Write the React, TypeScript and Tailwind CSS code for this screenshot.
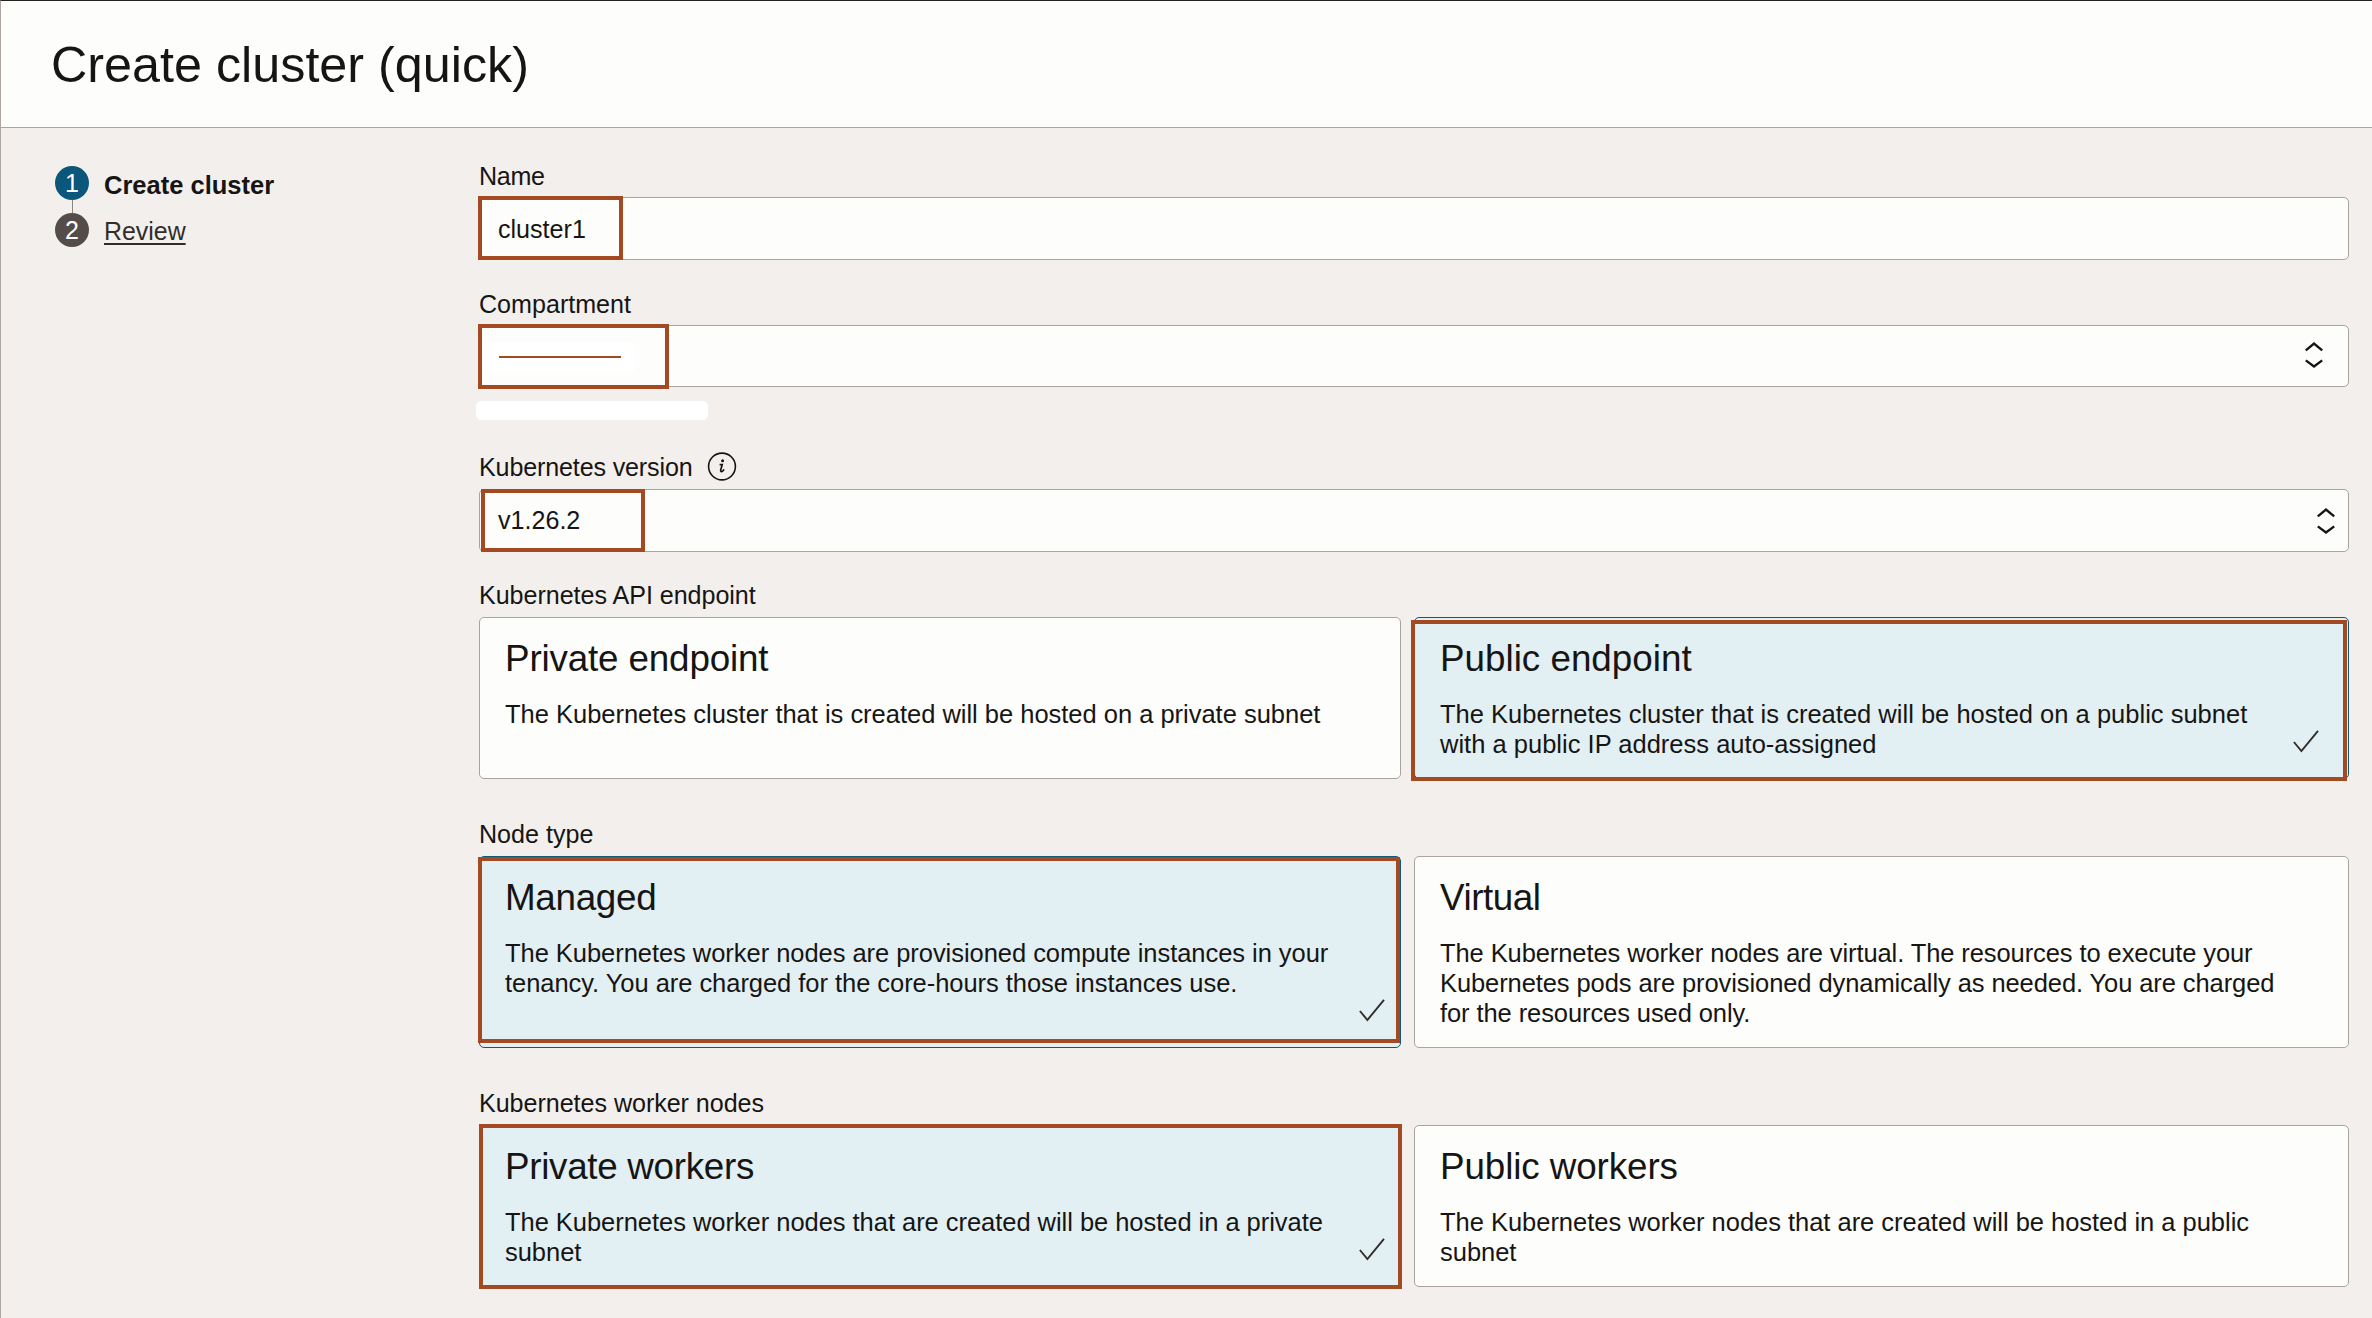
import type { ReactNode } from 'react';

function Highlight({ className }: { className: string }) {
  return <div className={'pointer-events-none absolute border-4 border-[#a34a22] ' + className} />;
}

function Label({ children, className }: { children: ReactNode; className: string }) {
  return (
    <div className={'flex h-[30px] items-center whitespace-nowrap text-[25.1px] leading-[30px] ' + className}>
      {children}
    </div>
  );
}

function Field({ children, className }: { children: ReactNode; className: string }) {
  return (
    <div
      className={
        'relative flex items-center justify-between rounded-[5px] border border-[#aaa39e] bg-[#fdfdfb] pl-[18px] text-[25.1px] leading-[30px] ' +
        className
      }
    >
      {children}
    </div>
  );
}

function Chevrons() {
  return (
    <svg width="18" height="26" viewBox="0 0 18 26" fill="none" stroke="#161513" strokeWidth="2.4">
      <path d="M0.8 8.4 L9 1.6 L17.2 8.4" />
      <path d="M0.8 18.4 L9 24.4 L17.2 18.4" />
    </svg>
  );
}

type CardProps = {
  title: string;
  titleClass?: string;
  lines: string[];
  textClass?: string;
  selected?: boolean;
  check?: string;
  highlight?: string;
};

function Card({ title, titleClass = '', lines, textClass = '', selected, check, highlight }: CardProps) {
  return (
    <div
      className={
        'relative rounded-[5px] border pl-[25px] pt-[21px] ' +
        (selected ? 'border-[#0b5a7c] bg-[#e2eff3]' : 'border-[#aaa39e] bg-[#fdfdfb]')
      }
    >
      <h2 className={'text-[36.8px] leading-[40px] ' + titleClass}>{title}</h2>
      <p className={'mt-[20px] text-[25.5px] leading-[30px] whitespace-nowrap ' + textClass}>
        {lines.map((line) => (
          <span key={line} className="block">
            {line}
          </span>
        ))}
      </p>
      {check && (
        <svg
          className={'absolute ' + check}
          width="26"
          height="23"
          viewBox="0 0 26 23"
          fill="none"
          stroke="#312d2a"
          strokeWidth="1.9"
        >
          <path d="M0.9 12 L8.4 21 L25 0.8" />
        </svg>
      )}
      {highlight && <Highlight className={highlight} />}
    </div>
  );
}

function CardRow({ children, className }: { children: ReactNode; className: string }) {
  return <div className={'grid grid-cols-[922px_935px] gap-[13px] ' + className}>{children}</div>;
}

export default function App() {
  return (
    <div className="h-[1318px] w-[2372px] overflow-hidden border-l border-t border-l-[#aca5a0] border-t-[#242120] bg-[#f3efed] font-['Liberation_Sans',Arial,sans-serif] text-[#161513]">
      <header className="flex h-[127px] items-center border-b border-[#aaa39e] bg-[#fdfdfb] pl-[50px] pt-[2px]">
        <h1 className="text-[50.3px] leading-[60px]">Create cluster (quick)</h1>
      </header>
      <div className="flex">
        <nav className="w-[478px] shrink-0 pl-[54px] pt-[38px]">
          <div className="flex h-[34px] items-center">
            <span className="flex size-[34px] items-center justify-center rounded-full bg-[#0b567b] text-[25px] leading-[34px] text-white">
              1
            </span>
            <span className="ml-[15px] mt-[3px] text-[25.5px] font-bold leading-[30px]">Create cluster</span>
          </div>
          <div className="ml-[17px] h-[13px] w-px bg-[#8b8580]" />
          <div className="flex h-[34px] items-center">
            <span className="flex size-[34px] items-center justify-center rounded-full bg-[#544c49] text-[25px] leading-[34px] text-white">
              2
            </span>
            <span className="ml-[15px] mt-[2px] text-[24.9px] leading-[30px] text-[#312d2a] underline decoration-2 underline-offset-[3px]">
              Review
            </span>
          </div>
        </nav>

        <main className="w-[1870px] pt-[33px]">
          <Label className="mb-[6px] tracking-[-0.3px]">Name</Label>
          <Field className="h-[63px]">
            <span>cluster1</span>
            <Highlight className="-left-[2px] -top-[2px] h-[64px] w-[145px]" />
          </Field>

          <Label className="mb-[6px] mt-[29px]">Compartment</Label>
          <Field className="h-[62px] pr-[25px]">
            <div className="-ml-[12px] mt-[2px] flex h-[30px] w-[149px] items-center rounded-[4px] bg-white pl-[13px]">
              <div className="h-[2px] w-[122px] bg-[#a34a22]" />
            </div>
            <div className="pb-[2px]">
              <Chevrons />
            </div>
            <Highlight className="-left-[2px] -top-[2px] h-[65px] w-[191px]" />
          </Field>
          <div className="-ml-[3px] mt-[14px] h-[19px] w-[232px] rounded-[5px] bg-white" />

          <Label className="mb-[7px] mt-[32px] tracking-[-0.15px]">
            Kubernetes version
            <svg className="ml-[14px]" width="30" height="30" viewBox="0 0 30 30" fill="none">
              <circle cx="15" cy="14.5" r="13.4" stroke="#161513" strokeWidth="1.6" />
              <circle cx="15.6" cy="8.8" r="1.5" fill="#161513" />
              <path d="M12.6 12.7 H15.2 L13.7 18 Q13.4 19.8 14.7 19.6 Q16.1 19.2 17 17.4" stroke="#161513" strokeWidth="1.7" />
            </svg>
          </Label>
          <Field className="h-[63px] pr-[13px]">
            <span className="-mt-[2px]">v1.26.2</span>
            <Chevrons />
            <Highlight className="-top-px left-[1px] h-[63px] w-[164px]" />
          </Field>

          <Label className="mb-[7px] mt-[28px] tracking-[-0.04px]">Kubernetes API endpoint</Label>
          <CardRow className="h-[162px]">
            <Card
              title="Private endpoint"
              titleClass="tracking-[-0.16px]"
              textClass="tracking-[-0.015px]"
              lines={['The Kubernetes cluster that is created will be hosted on a private subnet']}
            />
            <Card
              title="Public endpoint"
              lines={[
                'The Kubernetes cluster that is created will be hosted on a public subnet',
                'with a public IP address auto-assigned',
              ]}
              textClass="tracking-[0.01px]"
              selected
              check="left-[878px] top-[112px]"
              highlight="-left-[4px] top-[2px] h-[161px] w-[936px]"
            />
          </CardRow>

          <Label className="mb-[7px] mt-[40px]">Node type</Label>
          <CardRow className="h-[192px]">
            <Card
              title="Managed"
              titleClass="tracking-[-0.3px]"
              textClass="tracking-[-0.045px]"
              lines={[
                'The Kubernetes worker nodes are provisioned compute instances in your',
                'tenancy. You are charged for the core-hours those instances use.',
              ]}
              selected
              check="left-[879px] top-[142px]"
              highlight="-left-[2px] top-0 h-[186px] w-[922px]"
            />
            <Card
              title="Virtual"
              titleClass="tracking-[-0.45px]"
              textClass="tracking-[-0.09px]"
              lines={[
                'The Kubernetes worker nodes are virtual. The resources to execute your',
                'Kubernetes pods are provisioned dynamically as needed. You are charged',
                'for the resources used only.',
              ]}
            />
          </CardRow>

          <Label className="mb-[7px] mt-[40px] tracking-[-0.04px]">Kubernetes worker nodes</Label>
          <CardRow className="h-[162px]">
            <Card
              title="Private workers"
              titleClass="tracking-[-0.3px]"
              textClass="tracking-[-0.04px]"
              lines={['The Kubernetes worker nodes that are created will be hosted in a private', 'subnet']}
              selected
              check="left-[879px] top-[112px]"
              highlight="-left-px -top-[2px] h-[165px] w-[923px]"
            />
            <Card
              title="Public workers"
              titleClass="tracking-[-0.1px]"
              textClass="tracking-[-0.025px]"
              lines={['The Kubernetes worker nodes that are created will be hosted in a public', 'subnet']}
            />
          </CardRow>
        </main>
      </div>
    </div>
  );
}
